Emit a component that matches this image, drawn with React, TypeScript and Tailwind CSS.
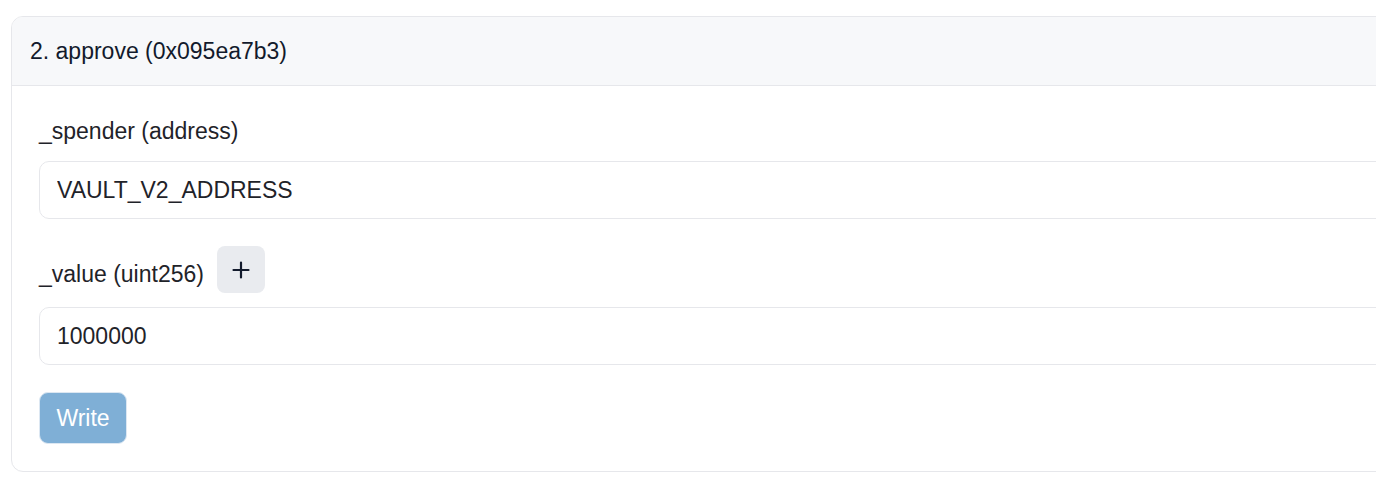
import React, { useState } from 'react';

const App = () => {
  const [spender, setSpender] = useState('VAULT_V2_ADDRESS');
  const [value, setValue] = useState('1000000');

  return (
    <div
      className="h-[482px] w-[1376px] overflow-hidden bg-white pt-4 pl-[11px]"
      style={{ fontFamily: '"Liberation Sans", Arial, Helvetica, sans-serif' }}
    >
      <div className="w-[1440px] overflow-hidden rounded-[12px] border border-[#e6e7eb] bg-white">
        <div className="flex h-[69px] items-center border-b border-[#e6e7eb] bg-[#f7f8fa] px-[18px]">
          <span className="text-[23px] text-[#121a2c]">2. approve (0x095ea7b3)</span>
        </div>

        <div className="flex flex-col px-[27px] pt-[29px] pb-[27px]">
          <label className="text-[23px] leading-[32px] text-[#1f2329]">_spender (address)</label>
          <input
            className="mt-[14px] h-[58px] rounded-[10px] border border-[#e6e7eb] px-[17px] text-[23px] text-[#1f2329] outline-none"
            value={spender}
            onChange={(e) => setSpender(e.target.value)}
          />

          <div className="mt-[27px] flex items-end gap-[13px]">
            <label className="mb-[3px] text-[23px] leading-[32px] text-[#1f2329]">_value (uint256)</label>
            <button className="flex h-[47px] w-[48px] items-center justify-center rounded-[8px] bg-[#e9ebef]">
              <svg width="18" height="18" viewBox="0 0 18 18" fill="none">
                <path d="M9 1.5v15M1.5 9h15" stroke="#121a2c" strokeWidth="2.2" strokeLinecap="round" />
              </svg>
            </button>
          </div>
          <input
            className="mt-[14px] h-[58px] rounded-[10px] border border-[#e6e7eb] px-[17px] text-[23px] text-[#1f2329] outline-none"
            value={value}
            onChange={(e) => setValue(e.target.value)}
          />

          <div className="mt-[27px]">
            <button className="h-[52px] w-[88px] rounded-[9px] border border-[#dce7f2] bg-[#7fafd6] text-[23px] text-white">
              Write
            </button>
          </div>
        </div>
      </div>
    </div>
  );
};

export default App;
